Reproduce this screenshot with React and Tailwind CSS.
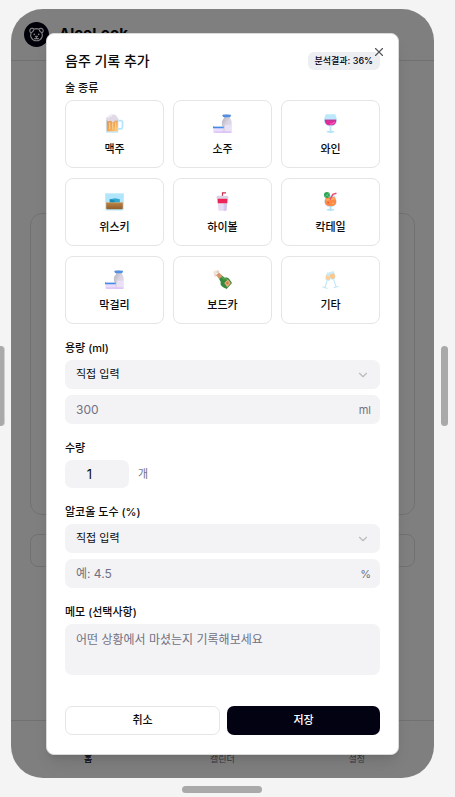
import React from "react";
import { X, ChevronDown } from "lucide-react";

function Beer() {
  return (
    <svg viewBox="0 0 32 32" className="size-[19px]" aria-hidden="true">
      <defs>
        <linearGradient id="beer" x1="0" y1="0" x2="1" y2="1">
          <stop offset="0" stopColor="#dd9560" />
          <stop offset="0.6" stopColor="#f5a953" />
          <stop offset="1" stopColor="#ffd27a" />
        </linearGradient>
      </defs>
      <path d="M22 11h4.500a3 3 0 0 1 3 3v8a3 3 0 0 1-3 3H22" fill="none" stroke="#b5e4fb" strokeWidth="3" />
      <path d="M1.500 9h21v20.500a2 2 0 0 1-2 2h-17a2 2 0 0 1-2-2z" fill="#c9e6f5" />
      <path d="M3 10h18.500v19H3z" fill="url(#beer)" />
      <path d="M8 14v12M13 15v11M18 14v12" stroke="#fbdca5" strokeWidth="1.500" />
      <path d="M2 10c-1-3 1-5 3-5 1-4 5-5 8-4 4-1 7 2 7 4 3 1 3 5 1 6-2 1-4-1-5 1-1 3-4 3-5 0-2-2-4 1-6 0z" fill="#e0dae6" />
      <path d="M6 6c1-3 4-4 6-3" stroke="#f8f5fb" strokeWidth="2" fill="none" />
    </svg>
  );
}

function Sake() {
  return (
    <svg viewBox="0 0 32 32" className="size-[19px]" aria-hidden="true">
      <defs>
        <linearGradient id="sake" x1="0" y1="0" x2="1" y2="1">
          <stop offset="0" stopColor="#aeaab8" />
          <stop offset="0.5" stopColor="#d8d5e0" />
          <stop offset="1" stopColor="#e8d8fb" />
        </linearGradient>
      </defs>
      <path d="M16 1h14.500l-2 4c0 3 3 5 3 9v16a1.500 1.500 0 0 1-1.500 1.500H15V14c0-4 4-6 4-9z" fill="url(#sake)" />
      <path d="M15.500 1.500q7.500-1.500 15 0L29 5q-6 1-12 0z" fill="#4f8fe6" />
      <path d="M20 18h11.500v12H20z" fill="#efe5fb" opacity="0.7" />
      <path d="M0 20h18l-1 10q-8 3-16 0z" fill="#eadcfb" />
      <path d="M0 20.500h18v3.500H0z" fill="#438be8" />
      <path d="M1 20h16v1.500H1z" fill="#d5e0f0" />
      <path d="M1 29.500h30v2H1z" fill="#d9bdf5" />
    </svg>
  );
}

function Wine() {
  return (
    <svg viewBox="0 0 32 32" className="size-[19px]" aria-hidden="true">
      <path d="M8 0.500h16c2 5 4.500 11 1.500 15.500-2 3-5 5-9.500 5s-7.500-2-9.500-5C3.500 11.500 6 5.500 8 0.500z" fill="#bde7fb" />
      <path d="M6.500 9.500h19c.500 5-2 9.500-9.500 9.500S6 14.500 6.500 9.500z" fill="#e02c9a" />
      <path d="M6.500 9.500h19v2h-19z" fill="#b93a92" />
      <path d="M15 17c4 0 7-2 8-4" stroke="#f35bb6" strokeWidth="2" fill="none" />
      <path d="M14.500 20.500h3V29h-3z" fill="#bfe6f7" />
      <ellipse cx="16" cy="30" rx="6.500" ry="1.800" fill="#b5e3f8" />
    </svg>
  );
}

function Whisky() {
  return (
    <svg viewBox="0 0 32 32" className="size-[19px]" aria-hidden="true">
      <defs>
        <linearGradient id="whisky" x1="0" y1="0" x2="0" y2="1">
          <stop offset="0" stopColor="#bd8447" />
          <stop offset="1" stopColor="#925d2c" />
        </linearGradient>
      </defs>
      <path d="M0 2h32l-.500 27q0 2-2 2h-27q-2 0-2-2z" fill="#bae9fb" />
      <path d="M2 4h28v12H2z" fill="#b0e6fb" />
      <path d="M8 12l9-1.500 8 1.500v6H8z" fill="#32a8d1" />
      <path d="M8 12l8 2v4H8z" fill="#208cb6" />
      <path d="M2 17.500q14 1.500 28 0V27q0 2-2 2H4q-2 0-2-2z" fill="url(#whisky)" />
      <path d="M2 17.500q14 1.500 28 0" stroke="#d7a462" strokeWidth="1" fill="none" />
    </svg>
  );
}

function Cup() {
  return (
    <svg viewBox="0 0 32 32" className="size-[19px]" aria-hidden="true">
      <path d="M16 8V1.500h6" stroke="#ca2d51" strokeWidth="2" fill="none" />
      <path d="M7.500 10h17l-1.500 20q-.200 1.500-2 1.500H11q-1.500 0-2-1.500z" fill="#e7dcf3" />
      <path d="M18 19h6l-1 11q-.200 1.500-2 1.500h-3z" fill="#d5c7e9" />
      <path d="M7.500 11h17L24 19H8z" fill="#ee2358" />
      <path d="M6 9q0-2.500 3-2.500h14q3 0 3 2.500v2H6z" fill="#d9d3e4" />
    </svg>
  );
}

function Cocktail() {
  return (
    <svg viewBox="0 0 32 32" className="size-[19px]" aria-hidden="true">
      <path d="M8 6h16c-1 4 3 6 2 12-1 5-5 7-10 7s-9-2-10-7c-1-6 3-8 2-12z" fill="#bde5f6" />
      <path d="M8.500 9h15c0 3 3 5 2 9-1 4-5 6-9.500 6S7.500 22 6.500 18c-1-4 2-6 2-9z" fill="#ff8946" />
      <path d="M9 14c4-3 9-1 14-3" stroke="#ffb05d" strokeWidth="3" fill="none" />
      <circle cx="10" cy="5" r="5" fill="#2ea65a" />
      <path d="M10 5l3-3M10 5l-3 3M10 5l3 3" stroke="#86cf8b" strokeWidth="1" />
      <path d="M15 13l5-9 6-2" stroke="#ee4c75" strokeWidth="2.500" fill="none" />
      <path d="M14.500 24h3v6h-3z" fill="#b1def2" />
      <ellipse cx="16" cy="30" rx="6.500" ry="1.800" fill="#b7e2f4" />
      <circle cx="12" cy="18" r="1.500" fill="#e65b32" />
      <circle cx="20" cy="19" r="1.500" fill="#ffb56a" />
    </svg>
  );
}

function Bottle() {
  return (
    <svg viewBox="0 0 32 32" className="size-[19px]" aria-hidden="true">
      <circle cx="3.500" cy="4" r="3" fill="#efe3da" />
      <circle cx="8" cy="3" r="2.500" fill="#e4d0c1" />
      <circle cx="4" cy="9" r="2.500" fill="#ecdcd1" />
      <path d="M8 11l4-4 8 6c4-1 6 0 8 3l4 6-9 10-6-3c-4-3-5-5-4-9z" fill="#368a3c" />
      <path d="M13 10l5 5c5-1 8 2 10 7" stroke="#62a84c" strokeWidth="1.800" fill="none" />
      <path d="M5 9l5-5 6 6-5 5z" fill="#d9956f" />
      <path d="M19 22l6-6 5 6-6 7z" fill="#edaa76" />
      <path d="M21.500 22l3-3 2.500 3-3 3z" fill="#d2784f" />
    </svg>
  );
}

function Cheers() {
  return (
    <svg viewBox="0 0 32 32" className="size-[19px]" aria-hidden="true">
      <g transform="rotate(18 10 16)">
        <path d="M7 4h8c1.500 7 1 14-4 14S5.500 11 7 4z" fill="#c8ebfa" />
        <path d="M6.800 9h8.400c.300 5-1 7.500-4.200 7.500S6.500 14 6.800 9z" fill="#fbd09a" />
        <path d="M11 18v11M6.500 30h9" stroke="#bfe6f8" strokeWidth="1.800" />
      </g>
      <g transform="rotate(-18 22 15)">
        <path d="M17 2h8c1.500 7 1 14-4 14s-5.500-7-4-14z" fill="#c8ebfa" />
        <path d="M16.800 6h8.400c.300 6-1 8.500-4.200 8.500S16.500 12 16.800 6z" fill="#f9c78c" />
        <path d="M21 16v12M16.500 29h9" stroke="#bfe6f8" strokeWidth="1.800" />
      </g>
    </svg>
  );
}

function BearLogo() {
  return (
    <svg
      viewBox="0 0 24 24"
      className="size-[15px]"
      fill="none"
      stroke="#fff"
      strokeWidth="1.800"
      strokeLinecap="round"
      strokeLinejoin="round"
      aria-hidden="true"
    >
      <path d="M8 3.500c2.500-1 5.500-1 8 0 1.500-2 5.500-2 6.500 1 .700 2-.500 4-2 5 .500 2 1.500 4 .500 6-1.500 4-5 6.500-9 6.500s-7.500-2.500-9-6.500c-1-2 0-4 .500-6-1.500-1-2.700-3-2-5 1-3 5-3 6.500-1z" />
      <path d="M4 9c1.500-1 3-2 3.500-4M20 9c-1.500-1-3-2-3.500-4" />
      <path d="M8.500 11.500v.500M15.500 11.500v.500" strokeWidth="2.500" />
      <path d="M10.500 15h3L12 16.500zM12 16.500V18M9 18.500c1 .800 2 .500 3-.500 1 1 2 1.300 3 .500" />
    </svg>
  );
}

const drinks = [
  ["맥주", Beer],
  ["소주", Sake],
  ["와인", Wine],
  ["위스키", Whisky],
  ["하이볼", Cup],
  ["칵테일", Cocktail],
  ["막걸리", Sake],
  ["보드카", Bottle],
  ["기타", Cheers],
];

const labelClass = "block text-[11px] leading-4 font-medium";
const fieldClass =
  "block w-full rounded-[7px] bg-[#f3f3f5] px-[11px] placeholder:text-[#717182] outline-none";

function DirectSelect({ id }) {
  return (
    <div className="grid items-center">
      <select
        id={id}
        className="col-start-1 row-start-1 h-[29px] w-full appearance-none rounded-[7px] bg-[#f3f3f5] px-[11px] text-[11px] outline-none"
      >
        <option>직접 입력</option>
      </select>
      <ChevronDown
        className="pointer-events-none col-start-1 row-start-1 mr-[10px] size-3.5 justify-self-end text-[#b9b9bf]"
        strokeWidth={2}
      />
    </div>
  );
}

function UnitInput({ id, placeholder, unit, name }) {
  return (
    <div className="grid items-center">
      <input
        id={id}
        aria-label={name}
        placeholder={placeholder}
        className={`${fieldClass} col-start-1 row-start-1 h-[29px] text-[12px]`}
      />
      <span className="pointer-events-none col-start-1 row-start-1 mr-[9px] justify-self-end text-[11px] leading-4 text-[#717182]">
        {unit}
      </span>
    </div>
  );
}

function Home() {
  return (
    <div className="flex flex-col bg-white [grid-area:1/1]">
      <header className="flex h-[52px] items-center gap-[10px] border-b border-[#e2e2e4] px-[13px]">
        <div className="flex size-[25px] items-center justify-center rounded-full bg-[#030213]">
          <BearLogo />
        </div>
        <h1 className="text-[15px] font-bold">AlcoLook</h1>
      </header>
      <main className="flex flex-1 flex-col gap-[19px] px-[19px] pt-[152px]">
        <section className="h-[302px] rounded-xl border border-[#e2e2e4]" />
        <div className="h-[33px] rounded-lg border border-[#e2e2e4]" />
      </main>
      <nav className="flex h-[58px] items-end border-t border-[#e2e2e4] px-[10px] pb-3 text-center text-[9px] leading-[14px] text-[#717182]">
        <a href="#home" className="flex-1 font-medium text-[#030213]">홈</a>
        <a href="#calendar" className="flex-1">캘린더</a>
        <a href="#settings" className="flex-1">설정</a>
      </nav>
    </div>
  );
}

function RecordDialog() {
  return (
    <form
      role="dialog"
      aria-labelledby="dialog-title"
      className="relative flex flex-1 flex-col gap-4 rounded-lg border border-[#d9d9d9] bg-white p-[18px] pb-[19px] shadow-lg"
      onSubmit={(e) => e.preventDefault()}
    >
      <div>
        <div className="mb-[10px] flex h-[18px] items-center justify-between">
          <h2 id="dialog-title" className="text-[14px] leading-[18px] font-medium">음주 기록 추가</h2>
          <span className="rounded-md bg-[#eceef2] px-[7px] text-[9px] leading-[18px] font-medium text-[#030213]">
            분석결과: 36%
          </span>
        </div>
        <fieldset>
          <legend className={`${labelClass} mb-1`}>술 종류</legend>
          <div className="grid grid-cols-3 gap-x-[9px] gap-y-[10px]">
            {drinks.map(([name, Icon]) => (
              <button
                key={name}
                type="button"
                className="flex h-[68px] flex-col items-center gap-2 rounded-lg border border-[#e5e5e7] pt-[13px] text-[11px] leading-4 font-medium"
              >
                <Icon />
                {name}
              </button>
            ))}
          </div>
        </fieldset>
      </div>

      <div>
        <label htmlFor="volume" className={`${labelClass} mb-1`}>용량 (ml)</label>
        <div className="flex flex-col gap-1.5">
          <DirectSelect id="volume" />
          <UnitInput id="volume-value" name="용량" placeholder="300" unit="ml" />
        </div>
      </div>

      <div>
        <label htmlFor="count" className={`${labelClass} mb-1`}>수량</label>
        <div className="flex items-center gap-[9px]">
          <div className="w-16">
            <input id="count" type="number" defaultValue={1} className={`${fieldClass} h-7 text-center text-[13px]`} />
          </div>
          <span className="text-[11px] leading-4 text-[#717182]">개</span>
        </div>
      </div>

      <div>
        <label htmlFor="abv" className={`${labelClass} mb-1`}>알코올 도수 (%)</label>
        <div className="flex flex-col gap-1.5">
          <DirectSelect id="abv" />
          <UnitInput id="abv-value" name="도수" placeholder="예: 4.5" unit="%" />
        </div>
      </div>

      <div>
        <label htmlFor="memo" className={`${labelClass} mb-1`}>메모 (선택사항)</label>
        <textarea
          id="memo"
          placeholder="어떤 상황에서 마셨는지 기록해보세요"
          className={`${fieldClass} h-[51px] resize-none py-[7px] text-[12px] leading-[18px]`}
        />
      </div>

      <div className="mt-[15px] flex gap-[7px] text-[11px] font-medium">
        <button type="button" className="h-[29px] flex-1 rounded-[7px] border border-[#e5e5e7]">취소</button>
        <button type="submit" className="h-[29px] flex-1 rounded-[7px] bg-[#030213] text-white">저장</button>
      </div>

      <button type="button" aria-label="닫기" className="absolute top-[11px] right-3 text-[#55555b]">
        <X className="size-3.5" strokeWidth={2} />
      </button>
    </form>
  );
}

export default function App() {
  return (
    <div className="flex min-h-screen flex-col bg-[#f4f4f4] pt-[9px] font-[Inter,'Noto_Sans_CJK_KR',sans-serif] text-[#0a0a0a]">
      <div className="flex items-center">
        <div className="w-[11px] shrink-0">
          <div className="mb-4 h-20 w-[5px] rounded-r-sm border-r border-[#cfcfcf] bg-[#a9a9a9]" />
        </div>
        <div className="grid min-w-0 flex-1 overflow-hidden rounded-[32px]">
          <Home />
          <div className="z-10 flex bg-black/50 px-[35px] pt-6 pb-[23px] [grid-area:1/1]">
            <RecordDialog />
          </div>
        </div>
        <div className="flex w-[21px] shrink-0 justify-center">
          <div className="mb-4 h-20 w-[7px] rounded-full bg-[#a9a9a9]" />
        </div>
      </div>
      <div className="flex justify-center pt-2 pr-[22px] pb-1 pl-[10px]">
        <div className="h-[7px] w-20 rounded-full bg-[#a9a9a9]" />
      </div>
    </div>
  );
}
